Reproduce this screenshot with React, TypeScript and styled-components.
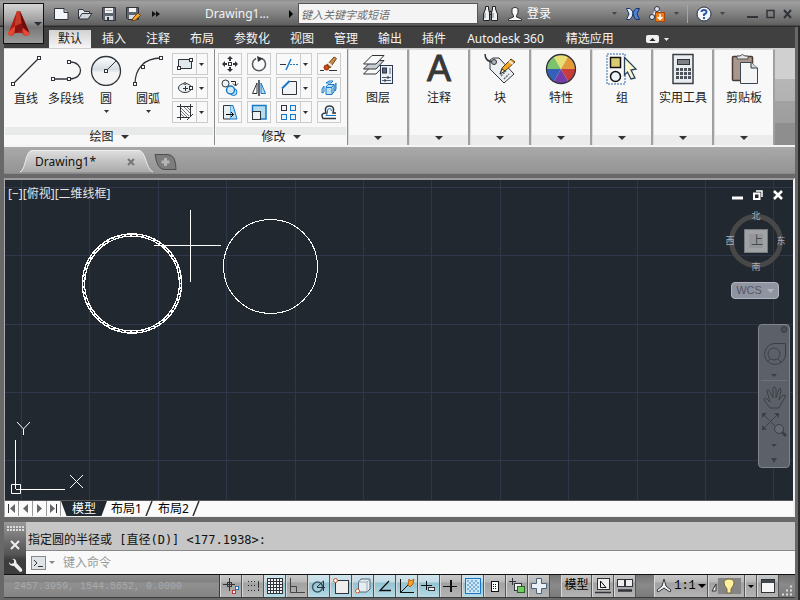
import React from "react";
import styled, { createGlobalStyle, css } from "styled-components";

const GlobalStyle = createGlobalStyle`
  * { box-sizing: border-box; }
  html, body { margin: 0; padding: 0; }
  body { background: #5a5a5a; font-family: "Noto Sans", "Noto Sans CJK SC", sans-serif; font-size: 12px; line-height: 16px; color: #222; }
  button, input { font: inherit; color: inherit; border: 0; padding: 0; margin: 0; background: none; border-radius: 0; }
  button { cursor: pointer; }
  svg { display: block; flex: none; }
`;

/* ---------- frame ---------- */

const Window = styled.div`
  position: relative;
  display: flex;
  flex-direction: column;
  min-height: 100vh;
  background: #686868;
  overflow: hidden;
`;

const Frame = styled.div`
  display: flex;
  flex: 1;
  flex-direction: column;
  padding-left: 4px;
  padding-right: 3px;
  border-right: 2px solid #2b2b2b;
`;

/* ---------- title bar ---------- */

const TitleBar = styled.header`
  display: flex;
  align-items: center;
  height: 27px;
  padding: 0 8px 0 53px;
  background: linear-gradient(#8c8c8c 0, #a0a0a0 2px, #8a8a8a 10px, #747474 18px, #606060 25px, #2c2c2c 26px);
  color: #f2f2f2;
`;

const AppButton = styled.button`
  position: absolute;
  left: 3px;
  top: 3px;
  width: 41px;
  height: 41px;
  border: 1px solid #111;
  background: linear-gradient(#d5d5d5, #a4a4a4 40%, #777 60%, #9c9c9c);
  display: flex;
  align-items: center;
  gap: 2px;
  padding: 0 2px;
`;

const QuickAccess = styled.nav`
  display: flex;
  align-items: center;
  gap: 8px;
  width: 152px;
`;

const IconButton = styled.button`
  display: flex;
  align-items: center;
  justify-content: center;
`;

const DocTitle = styled.h1`
  margin: 0;
  width: 82px;
  font-size: 12px;
  line-height: 16px;
  font-weight: 400;
  white-space: nowrap;
`;

const SearchInput = styled.input`
  width: 180px;
  height: 21px;
  margin-left: 3px;
  padding: 2px 2px 0;
  border: 1px solid #555;
  background: #f4f4f4;
  color: #333;
  font-style: italic;
  font-size: 11px;
  &::placeholder { color: #6c6c6c; opacity: 1; }
`;

const Account = styled.div`
  display: flex;
  align-items: center;
  gap: 8px;
  flex: 1;
  padding-left: 4px;
`;

const SignIn = styled.button`
  display: flex;
  align-items: center;
  gap: 4px;
  color: #fff;
`;

const InfoTools = styled.div`
  display: flex;
  align-items: center;
  gap: 8px;
  margin-right: 22px;
`;

const Rule = styled.span`
  width: 1px;
  height: 18px;
  background: #a5a5a5;
`;

const WindowControls = styled.div`
  display: flex;
  align-items: center;
  gap: 8px;
`;

/* ---------- ribbon ---------- */

const RibbonTabs = styled.nav`
  display: flex;
  align-items: flex-end;
  height: 21px;
  padding-left: 45px;
  background: #404040;
`;

const RibbonTab = styled.button<{ $active?: boolean; $wide?: boolean }>`
  height: 18px;
  padding: 0 10px;
  color: #f4f4f4;
  white-space: nowrap;
  ${(p) => p.$wide && css`padding: 0 12px 0 11px;`}
  ${(p) => p.$active && css`
    width: 42px;
    padding: 0;
    margin-right: 1px;
    color: #222;
    background: linear-gradient(#d2d2d2, #f6f6f6);
  `}
`;

const RibbonToggle = styled.button`
  display: flex;
  align-items: center;
  gap: 5px;
  height: 18px;
  margin-left: 22px;
`;

const Ribbon = styled.section`
  display: flex;
  height: 99px;
  border-top: 1px solid #cfcfcf;
  border-bottom: 2px solid #f4f4f4;
  background: #c4c4c4;
`;

const Panel = styled.div`
  display: flex;
  flex-direction: column;
  background: #f8f8f8;
  border-right: 1px solid #8e8e8e;
  padding: 0 1px;
`;

const PanelBody = styled.div<{ $modify?: boolean }>`
  display: flex;
  flex: 1;
  padding: ${(p) => (p.$modify ? "4px 5px 0 2px" : "4px 5px 0 1px")};
`;

const PanelTitle = styled.button`
  display: flex;
  align-items: center;
  justify-content: center;
  gap: 7px;
  height: 18px;
  padding-top: 2px;
  background: linear-gradient(#e8eae9 8px, #f8f8f8 8px);
`;

const LargeTool = styled.button`
  display: flex;
  flex-direction: column;
  align-items: center;
  width: 40px;
  height: 62px;
  padding-top: 1px;
  white-space: nowrap;
  &:nth-child(4) { margin: 0 4px 0 2px; }
`;

const ToolLabel = styled.span`
  margin: 5px 0 3px;
`;

const ToolGrid = styled.div<{ $cols: string }>`
  display: grid;
  grid-template-columns: ${(p) => p.$cols};
  grid-auto-rows: 22px;
  gap: 2px 5px;
`;

const SmallTool = styled.button`
  display: flex;
  align-items: center;
  justify-content: space-around;
  height: 22px;
  border: 1px solid #c9cbcd;
  background: #f9f9f9;
`;

const SplitTool = styled(SmallTool)`
  display: grid;
  grid-template-columns: 23px 11px;
  justify-items: center;
  background: linear-gradient(90deg, #f9f9f9 23px, #c9cbcd 23px, #c9cbcd 24px, #f9f9f9 24px);
`;

const CompactPanel = styled.button`
  display: flex;
  flex-direction: column;
  align-items: center;
  width: 61px;
  padding-top: 3px;
  border-top: 1px solid #dcdcdc;
  border-right: 2px solid #a0a0a0;
  border-left: 1px solid #dcdcdc;
  background: linear-gradient(#f8f8f8 85px, #ececec 85px);
  white-space: nowrap;
  & > :last-child { margin-top: auto; margin-bottom: 5px; }
`;

const RibbonFill = styled.div`
  flex: 1;
  background: linear-gradient(#d0d0d0 30px, #b6b6b6 30px, #b2b2b2 52px, #a2a2a2 52px, #9e9e9e 74px, #8e8e8e 74px);
`;

/* ---------- document tabs ---------- */

const DocTabs = styled.div`
  display: flex;
  align-items: flex-end;
  height: 27px;
  padding-left: 16px;
  padding-bottom: 1px;
  background: linear-gradient(#a9a9a9 0, #9f9f9f 12px, #949494 26px, #808080 27px);
`;

const DocTab = styled.div`
  position: relative;
  display: flex;
  align-items: center;
  justify-content: space-between;
  width: 130px;
  height: 23px;
  padding: 0 15px;
  color: #111;
`;

const TabShape = styled.svg`
  position: absolute;
  left: 0;
  top: 0;
`;

const TabText = styled.button`
  position: relative;
`;

/* ---------- drawing area ---------- */

const Viewport = styled.main`
  display: flex;
  flex: 1;
  flex-direction: column;
  margin: 4px 0 5px;
  border-top: 2px solid #999;
  border-left: 1px solid #aaa;
  border-right: 2px solid #f0f0f0;
  border-bottom: 1px solid #f0f0f0;
`;

const Canvas = styled.div`
  position: relative;
  flex: 1;
  min-height: 310px;
  background: #212830;
  overflow: hidden;
`;

const Drawing = styled.svg`
  position: absolute;
  inset: 0;
  width: 100%;
  height: 100%;
`;

const ViewLabel = styled.div`
  position: absolute;
  left: 3px;
  top: 6px;
  color: #e4e4e4;
  white-space: nowrap;
`;

const ChildControls = styled.div`
  position: absolute;
  right: 10px;
  top: 10px;
  display: flex;
  gap: 10px;
`;

const ViewCube = styled.div`
  position: absolute;
  right: 6px;
  top: 30px;
  display: grid;
  justify-items: center;
  gap: 10px;
`;

const WcsButton = styled.button`
  display: flex;
  align-items: center;
  justify-content: center;
  gap: 5px;
  width: 48px;
  height: 17px;
  margin-left: -2px;
  border: 1px solid #b1b5c1;
  border-radius: 4px;
  background: #9094a1;
  color: #535866;
  font: 11px/15px "Liberation Sans", sans-serif;
`;

const NavBar = styled.div`
  position: absolute;
  right: 3px;
  top: 144px;
  width: 32px;
  height: 144px;
  border: 1px solid #80858d;
  border-radius: 4px;
  background: #5c6169;
`;

const LayoutTabs = styled.nav`
  display: flex;
  align-items: stretch;
  height: 16px;
  border-top: 1px solid #555;
  background: #fafafa;
  color: #000;
`;

const PageButton = styled.button`
  width: 14px;
  display: flex;
  align-items: center;
  justify-content: center;
  border-right: 1px solid #999;
`;

const LayoutTab = styled.button<{ $active?: boolean }>`
  padding: 0 3px 0 4px;
  line-height: 14px;
  ${(p) => p.$active && css`
    width: 46px;
    padding: 0;
    color: #fff;
    background: #212830;
    clip-path: polygon(0 0, 100% 0, 88% 100%, 12% 100%);
  `}
`;

/* ---------- command line ---------- */

const CommandPanel = styled.section`
  display: grid;
  grid-template-columns: 22px 1fr;
  height: 52px;
`;

const CommandSide = styled.div`
  display: flex;
  flex-direction: column;
  align-items: center;
  justify-content: space-between;
  padding: 4px 2px 0;
  background: linear-gradient(#999, #666 22px, #555 32px, #3c3c3c 38px);
`;

const CommandHistory = styled.output`
  display: block;
  height: 29px;
  padding: 10px 2px 0;
  border-bottom: 1px solid #888;
  background: #c6c6c6;
  color: #111;
  font-family: "DejaVu Sans Mono", "Noto Sans CJK SC", monospace;
  white-space: nowrap;
  overflow: hidden;
`;

const CommandRow = styled.label`
  display: flex;
  align-items: center;
  gap: 3px;
  height: 23px;
  padding-left: 5px;
  background: #f9f9f9;
`;

const CommandInput = styled.input`
  flex: 1;
  min-width: 0;
  height: 20px;
  margin-left: 5px;
  outline: 0;
  &::placeholder { color: #999; opacity: 1; }
`;

/* ---------- status bar ---------- */

const StatusBar = styled.footer`
  display: flex;
  height: 24px;
  margin-bottom: 2px;
  border-top: 1px solid #111;
  border-bottom: 1px solid #3c3c3c;
  background: linear-gradient(#757575, #8a8a8a 10px, #7a7a7a);
`;

const Coordinates = styled.div`
  flex: 1;
  padding: 4px 0 0 10px;
  border-right: 1px solid #3c3c3c;
  background: linear-gradient(#8e8e8e, #828282 7px, #909090 8px, #848484);
  color: #a9a9a9;
  font: 10px/16px "Liberation Mono", monospace;
  white-space: nowrap;
`;

const StatusButton = styled.button<{ $on?: boolean; $width?: number }>`
  display: flex;
  align-items: center;
  justify-content: center;
  gap: 2px;
  width: ${(p) => p.$width ?? 22}px;
  border-right: 1px solid #555;
  border-left: 1px solid #d8d8d8;
  background: ${(p) =>
    p.$on
      ? "linear-gradient(#d2e4ec, #c3dde7 7px, #93c3d2 8px, #b5dbe6)"
      : "linear-gradient(#c9c9c9, #b9b9b9 7px, #a2a2a2 8px, #b4b4b4)"};
  color: #000;
  font-family: "Liberation Mono", "Noto Sans CJK SC", monospace;
  font-size: 12px;
  white-space: nowrap;
`;

const StatusGap = styled.span<{ $width: number }>`
  width: ${(p) => p.$width}px;
`;

/* ---------- icons ---------- */

type GlyphProps = { w?: number; h?: number; children: React.ReactNode };
const Glyph = ({ w = 16, h = 16, children }: GlyphProps) => (
  <svg width={w} height={h} viewBox={`0 0 ${w} ${h}`} fill="none" stroke="#30343a" aria-hidden="true">
    {children}
  </svg>
);

const Caret = ({ w = 5, color = "#333" }: { w?: number; color?: string }) => (
  <svg width={w} height={Math.ceil(w / 2)} viewBox="0 0 10 5" preserveAspectRatio="none" aria-hidden="true">
    <path d="M0 0H10L5 5Z" fill={color} />
  </svg>
);

const Node = ({ x, y }: { x: number; y: number }) => (
  <rect x={x - 1.5} y={y - 1.5} width="3" height="3" fill="#fff" stroke="#30343a" />
);

const NewIcon = () => (
  <Glyph><path d="M1.500 2.500H11L15 6.500V13.500H1.500Z" fill="#f3f6f8" /><path d="M11 2.500V6.500H15" fill="#b8bec4" /></Glyph>
);
const OpenIcon = () => (
  <Glyph><path d="M1.500 13V3.500H6L7.500 5.500H12.500V7" fill="#e4e7ea" /><path d="M1.500 13L5 7.500H15L11 13Z" fill="#cfd5da" /></Glyph>
);
const SaveIcon = () => (
  <Glyph><path d="M1.500 1.500H14.500V14.500H3L1.500 13Z" fill="#5e6570" /><path d="M4 2H12V7H4Z" fill="#f4f4f4" stroke="none" /><path d="M4 10H12V14H4Z" fill="#d8dce0" stroke="none" /><path d="M7 11V14" strokeWidth="2" /><path d="M5 4.500H11" stroke="#aaa" /></Glyph>
);
const SaveAsIcon = () => (
  <Glyph><path d="M1.500 1.500H13.500V13.500H3L1.500 12Z" fill="#5e6570" /><path d="M4 2H11V6H4Z" fill="#f4f4f4" stroke="none" /><path d="M4 9H10V13H4Z" fill="#d8dce0" stroke="none" /><path d="M7 15L8 12L13 7L15.500 9.500L10.500 14Z" fill="#f2a530" stroke="#6b4210" /></Glyph>
);
const AppLogo = () => (
  <svg width="26" height="30" viewBox="0 0 26 30" aria-hidden="true">
    <path d="M11 2H14L24 25L19 27L16 24H9L6 27L2 25Z" fill="#b21c17" />
    <path d="M11 2L9 17L2 23V26L7 27L9 21L16 15Z" fill="#df4a32" />
    <path d="M11 2H14L18 13L9 17Z" fill="#c63a28" />
    <path d="M14 2L24 25L16 17Z" fill="#6d0b0c" />
    <path d="M9 17L16 14L18 21L9 24Z" fill="#8a1111" />
    <path d="M16 19L24 24V26L18 27Z" fill="#e04a38" />
  </svg>
);
const Binoculars = () => (
  <Glyph w={17} h={17}><path d="M3.500 1.500H6.500V4L7.500 8V15.500H1.500V9L3.500 4Z" fill="#eef1f3" stroke="#222" /><path d="M10.500 1.500H13.500V4L15.500 9V15.500H9.500V8L10.500 4Z" fill="#eef1f3" stroke="#222" /><path d="M7 6.500H10M7 9.500H10" stroke="#222" /><path d="M3 8V13M11 8V13" stroke="#79828a" /></Glyph>
);
const UserIcon = () => (
  <Glyph><path d="M5 2.500Q8 0 11 2.500V7L9.500 9.500V11L14.500 13V14.500H1.500V13L6.500 11V9.500L5 7Z" fill="#fafafa" stroke="#333" /></Glyph>
);
const ExchangeIcon = () => (
  <Glyph><path d="M1.500 2.500H5L8 6L7.500 10L5 13.500H1.500L4 8Z" fill="#e2edf9" stroke="#1b3568" /><path d="M14.500 2.500H11L8 6L8.500 10L11 13.500H14.500L12 8Z" fill="#4c83d8" stroke="#1b3568" /></Glyph>
);
const CloudIcon = () => (
  <Glyph w={17}><path d="M3 11L8 3L11 7" stroke="#e5e9f0" strokeWidth="2" /><circle cx="3" cy="11" r="2.500" fill="#dfe7f3" stroke="#334" /><circle cx="8" cy="3" r="2.500" fill="#dfe7f3" stroke="#334" /><rect x="6.500" y="6.500" width="9" height="9" fill="#ef7b16" stroke="#a5460c" /><path d="M11 8V13M8.500 11L11 13.500L13.500 11" stroke="#fff" strokeWidth="1.500" /></Glyph>
);
const HelpIcon = () => (
  <Glyph><circle cx="8" cy="8" r="7" fill="#f4f7fb" stroke="#222e46" /><path d="M5.500 6Q5.500 4 8 4T10.500 6Q10.500 7.500 8 8.500V10M8 11V13" stroke="#2b5aa8" strokeWidth="2" /></Glyph>
);

const LineIcon = () => <Glyph w={32} h={32}><path d="M3 30L29 4" strokeWidth="1.300" /><Node x={3} y={30} /><Node x={29} y={4} /></Glyph>;
const PolyIcon = () => <Glyph w={32} h={32}><path d="M3 25H20C34 25 34 8 20 8" strokeWidth="1.300" /><Node x={3} y={25} /><Node x={19} y={25} /><Node x={19} y={8} /></Glyph>;
const CircleIcon = () => (
  <Glyph w={32} h={32}>
    <defs><linearGradient id="disc" x2="0" y2="1"><stop offset="0" stopColor="#fff" /><stop offset=".45" stopColor="#d4dde3" /><stop offset=".55" stopColor="#f4f4f4" /></linearGradient></defs>
    <circle cx="16" cy="17" r="14.500" fill="url(#disc)" strokeWidth="1.300" /><path d="M16 17L26 7" /><Node x={16} y={17} />
  </Glyph>
);
const ArcIcon = () => <Glyph w={32} h={32}><path d="M3 30C3 15 12 4 29 4" strokeWidth="1.300" /><Node x={3} y={30} /><Node x={11} y={13} /><Node x={29} y={4} /></Glyph>;

const RectIcon = () => <Glyph><path d="M1.500 3.500H14.500V12.500H1.500Z" fill="#e0e9ee" /><Node x={14} y={4} /><Node x={2} y={12} /></Glyph>;
const EllipseIcon = () => <Glyph><ellipse cx="8" cy="8" rx="6.500" ry="4.500" fill="#edf1f3" /><path d="M6 8.500H11M8.500 6V11" /><Node x={14} y={8} /><circle cx="8" cy="3.500" r="1" fill="#fff" /></Glyph>;
const HatchIcon = () => <Glyph><path d="M3.500 0V16M0 2.500H16M13.500 0V12M0 13.500H12M16 10L10 16" /><path d="M4 4L12 12M4 7L10 13M4 10L7 13M7 3L13 9M10 3L13 6" stroke="#777" /></Glyph>;
const MoveIcon = () => <Glyph><path d="M8 0L11 3H9V5H7V3H5ZM8 16L5 13H7V11H9V13H11ZM0 8L3 5V7H5V9H3V11ZM16 8L13 11V9H11V7H13V5Z" fill="#30343a" stroke="none" /><Node x={8} y={8} /></Glyph>;
const RotateIcon = () => <Glyph><path d="M11 2.500A6.500 6.500 0 1 1 5 2.500" stroke="#555a60" strokeWidth="1.500" /><path d="M6 0L12 2.500L7 6Z" fill="#30343a" stroke="none" /></Glyph>;
const TrimIcon = () => <Glyph w={18}><path d="M0 8.500H6" /><path d="M6 14L11 3" stroke="#1979c8" strokeWidth="1.500" /><path d="M10 8.500H18" stroke="#1979c8" strokeDasharray="2 1" /></Glyph>;
const EraseIcon = () => <Glyph w={18} h={18}><path d="M7 10L14 2L16.500 3.500L10 13Z" fill="#c98b42" stroke="#70441c" /><path d="M8 8L12 11" stroke="#eee" strokeWidth="2" /><circle cx="6.500" cy="12.500" r="2.500" fill="#c94d16" stroke="#8c2f0c" /><path d="M0 15.500H4M9 15.500H17" /></Glyph>;
const CopyIcon = () => <Glyph w={18} h={18}><circle cx="4.500" cy="4.500" r="3.500" fill="#eef2f4" /><circle cx="12.500" cy="13" r="3.500" fill="#bedff2" stroke="#1979c8" /><circle cx="9.500" cy="11" r="4" fill="#d5ecf7" stroke="#1979c8" strokeWidth="1.500" /><path d="M10 2.500H14.500V6M12 4.500L14.500 7L17 4.500" stroke="#222" /></Glyph>;
const MirrorIcon = () => <Glyph><path d="M6 3V13.500H1.500Z" fill="#fff" /><path d="M8 0V16" strokeWidth="1.500" /><path d="M10 3V13.500H14.500Z" fill="#b4dcf0" stroke="#1979c8" /></Glyph>;
const ChamferIcon = () => <Glyph><path d="M8 1.500H15.500V14.500H1.500V8" fill="#f1f3f4" /><path d="M1 8.500L8.500 1" stroke="#1979c8" strokeWidth="2" /></Glyph>;
const ExplodeIcon = () => <Glyph><path d="M5 7.500H11V14.500H5ZM5 7L7 4.500H13L11 7M13 5V12L11 14" fill="#b9e1f2" stroke="#1979c8" /><path d="M3 6L1 9V13L3 12ZM5 3L8 1H12L10 3ZM15 3V9L14 11V5Z" fill="#dceef7" stroke="#1979c8" /></Glyph>;
const StretchIcon = () => <Glyph><path d="M8 1.500H11L15 15H8Z" fill="#b4dcec" stroke="#1979c8" /><path d="M8 1.500H1.500V15H8" fill="#e9eef1" /><path d="M4 10.500H11M9 8L11.500 10.500L9 13" stroke="#000" /></Glyph>;
const ScaleIcon = () => <Glyph><path d="M1.500 9V1.500H15V15H9" fill="#b4dcec" stroke="#1979c8" strokeWidth="1.500" /><rect x="1.500" y="7.500" width="8" height="8" fill="#eef1f3" /></Glyph>;
const ArrayIcon = () => <Glyph w={17} h={17}><rect x="1.500" y="1.500" width="5" height="5" fill="#f2f2f2" /><g stroke="#1979c8" fill="#e4f1f8"><rect x="10.500" y="1.500" width="5" height="5" /><rect x="1.500" y="10.500" width="5" height="5" /><rect x="10.500" y="10.500" width="5" height="5" /></g></Glyph>;
const OffsetIcon = () => <Glyph><path d="M15 14.500H2Q-1 9 5 9Q3 2 8.500 2T12 9H15" strokeWidth="1.500" /><path d="M15 11.500H5Q7 10 6.500 7Q6.500 4.500 8.500 4.500T10.500 7" stroke="#1979c8" /></Glyph>;

const LayersIcon = () => (
  <Glyph w={32} h={32}>{[21, 16, 11].map((y) => <path key={y} d={`M1.500 ${y}L10 ${y - 8.5}H22L14 ${y}Z`} fill={y === 16 ? "#c8ced3" : "#f8f8f8"} />)}<rect x="18.500" y="12.500" width="12" height="18" fill="#edf1f5" stroke="#283850" /><rect x="20.500" y="15" width="4" height="5" fill="#52698b" /><path d="M28 15V21M20 24.500H29M20 27.500H29" stroke="#555e6b" /><path d="M26 23V26M23 26V29" /></Glyph>
);
const TextIcon = styled.span`
  height: 32px;
  color: #383838;
  font: 36px/32px "Liberation Sans", sans-serif;
  -webkit-text-stroke: 1px #383838;
`;
const BlockIcon = () => (
  <Glyph w={32} h={32}><path d="M6 7L9 5H15L30 21L20 30L6 16Z" fill="#edf0f2" /><path d="M1 1C1 7 5 9 10 9" strokeWidth="1.500" /><circle cx="10" cy="9" r="2.500" fill="#aab2ba" /><path d="M17 23L22 18M20 26L25 21" stroke="#687078" strokeWidth="1.500" strokeDasharray="2 1" /><path d="M16 21L18 15L27 6L31 9L21 18Z" fill="#f5a623" stroke="#563a18" /><path d="M25 8L29 11" stroke="#eee" strokeWidth="2" /><path d="M16 21L18 16L21 18Z" fill="#fff0bd" /></Glyph>
);
const wheel = ["#c63c38", "#753ca9", "#3660b7", "#7dc36b", "#e7df73", "#e49a3b"];
const WheelIcon = () => (
  <Glyph w={32} h={32}>
    {wheel.map((c, i) => {
      const a = (i * Math.PI) / 3, b = a + Math.PI / 3;
      return <path key={c} d={`M16 16L${16 + 14.5 * Math.cos(a)} ${16 + 14.5 * Math.sin(a)}A14.5 14.5 0 0 1 ${16 + 14.5 * Math.cos(b)} ${16 + 14.5 * Math.sin(b)}Z`} fill={c} stroke="none" />;
    })}
    <circle cx="16" cy="16" r="14.500" strokeWidth="1.300" />
  </Glyph>
);
const GroupIcon = () => (
  <Glyph w={32} h={32}><rect x="1" y="1" width="18" height="30" stroke="#3468aa" strokeDasharray="2 1" /><rect x="4.500" y="4.500" width="10" height="10" fill="#dacb70" stroke="#111" strokeWidth="1.500" /><circle cx="9.500" cy="23.500" r="5" fill="#edf5f8" stroke="#111" strokeWidth="1.500" /><path d="M18.500 4.500L30 16L25 17L29 25L25 26L21.500 19L18.500 22Z" fill="#fbf7cf" stroke="#29435f" strokeWidth="1.300" /></Glyph>
);
const CalcIcon = () => (
  <Glyph w={32} h={32}><rect x="6" y="1.500" width="20" height="29" fill="#e9edf0" stroke="#3b3f46" strokeWidth="1.500" /><rect x="10.500" y="6.500" width="12" height="5" fill="#7b8187" />{[15, 19, 23].map((y) => [9, 13, 17, 21].map((x) => <rect key={`${x}-${y}`} x={x} y={y} width="3" height="3" fill="#4c535d" stroke="none" />))}</Glyph>
);
const ClipboardIcon = () => (
  <Glyph w={32} h={32}><rect x="4.500" y="3.500" width="20" height="24" rx="1" fill="#a8978a" stroke="#493b32" strokeWidth="1.500" /><path d="M9 6V3H12Q14 0 17 3H20V6Z" fill="#e5e7ea" stroke="#555" /><path d="M12.500 9.500H23L29.500 15V30.500H12.500Z" fill="#f3f5f7" stroke="#3c4653" /><path d="M23 9.500V15H29.500" fill="#d7dce0" /></Glyph>
);

/* ---------- drawing content ---------- */

const steps = Array.from({ length: 40 }, (_, i) => i);
const gridX = (i: number) => Math.round(21 + i * 68.4) + 0.5;
const gridY = (i: number) => Math.round(187 + i * 68.3) + 0.5;

const CadDrawing = () => (
  <Drawing aria-label="Model space">
    <defs>
      <pattern id="minor" width="13.680" height="13.660" patternUnits="userSpaceOnUse" x="21" y="187">
        <rect width="1" height="1" fill="#2b323d" />
      </pattern>
    </defs>
    <g transform="translate(-5 -180)" fill="none">
      <rect width="2700" height="2700" fill="url(#minor)" />
      {steps.map((i) => <path key={i} d={`M${gridX(i)} 0V2700M0 ${gridY(i)}H2700`} stroke="#2f374a" />)}
      <circle cx="132" cy="283.500" r="48.500" stroke="#fff" strokeWidth="3.500" shapeRendering="crispEdges" />
      <circle cx="132" cy="283.500" r="48.500" stroke="#212830" strokeDasharray="4 2" shapeRendering="crispEdges" />
      <circle cx="270.500" cy="266.500" r="47" stroke="#fff" shapeRendering="crispEdges" />
      <path d="M190.500 210V282M154 245.500H221" stroke="#fff" />
      <g stroke="#fff">
        <path d="M15.500 440V489M16 489.500H65M11.500 484.500H20.500V493.500H11.500Z" />
        <path d="M17 422L23.500 429V435M30 422L23.500 429M70 475L83 488M83 475L70 488" strokeWidth="1" />
      </g>
    </g>
  </Drawing>
);

const Compass = () => (
  <svg width="62" height="62" viewBox="0 0 62 62" fontSize="9" fill="#aaaeb2" textAnchor="middle" fontFamily="Noto Sans CJK SC, sans-serif">
    <circle cx="31" cy="31" r="24.500" fill="none" stroke="#484848" strokeWidth="5" />
    <rect x="19.500" y="19.500" width="23" height="23" fill="#a0a3a6" stroke="#777b80" />
    <rect x="24" y="24" width="14" height="14" fill="#94979a" />
    <text x="32" y="35" fontSize="12" fill="#46494d">上</text>
    <text x="31" y="9">北</text><text x="31" y="60">南</text><text x="5" y="34">西</text><text x="56" y="34">东</text>
  </svg>
);

const NavIcons = () => (
  <svg width="30" height="142" viewBox="0 0 30 142" fill="none" stroke="#3c4045" aria-hidden="true">
    <circle cx="25" cy="4.500" r="3" fill="#4a4e54" />
    <path d="M15 18.500H26.500V30A10.500 10.500 0 1 1 15 18.500M8 37L12 33M22 37L18 33" /><circle cx="15" cy="29" r="6" />
    <path d="M12 49H18L15 52Z" fill="#3c4045" stroke="none" />
    <path d="M2 55.500H28" stroke="#6d7178" />
    <path d="M11 83L5 75Q4 72 8 74L11 77L8 66Q9 63 11 67L14 73V63Q16 60 17 64V73L20 64Q22 62 22 66L20 75L24 70Q27 69 26 72L20 83Z" />
    <path d="M5 90L18 103M18 90L5 103" /><path d="M3 88H8L3 93ZM20 88V93L15 88ZM3 105V100L8 105Z" fill="#3c4045" stroke="none" /><circle cx="20" cy="104" r="4.500" fill="#646a72" /><path d="M23 107L27 111" strokeWidth="3" />
    <path d="M12 119H18L15 122ZM12 133H18L15 138Z" fill="#3c4045" stroke="none" />
  </svg>
);

/* ---------- status icons ---------- */

const statusIcons: { label: string; on?: boolean; icon: React.ReactNode }[] = [
  { label: "推断约束", icon: <><path d="M0 6.500H12M6.500 0V13" /><rect x="4.500" y="4.500" width="4" height="4" /><rect x="12.500" y="8.500" width="3" height="3" stroke="#2a70b0" fill="#fff" /><rect x="9.500" y="12.500" width="3" height="3" stroke="#c33" fill="#fff" /></> },
  { label: "捕捉模式", icon: <><path d="M3 3.500H12M3 7.500H12M3 12.500H12" stroke="#222" strokeDasharray="1 2" /><path d="M13.500 3V13" strokeDasharray="7 1" /></> },
  { label: "栅格显示", on: true, icon: <><rect x=".5" y=".5" width="15" height="15" fill="#f5f5f5" /><path d="M3.500 0V16M6.500 0V16M9.500 0V16M12.500 0V16M0 3.500H16M0 6.500H16M0 9.500H16M0 12.500H16" /></> },
  { label: "正交模式", icon: <path d="M1.500 0V14.500H16M2 8.500H7.500V14" strokeWidth="1" stroke="#444" /> },
  { label: "极轴追踪", on: true, icon: <><circle cx="6.500" cy="9" r="5" stroke="#456" strokeWidth="1.500" /><path d="M6 9.500H14M6 9L12.500 3V13" /></> },
  { label: "对象捕捉", on: true, icon: <><rect x="2.500" y="2.500" width="13" height="13" fill="#eee" /><circle cx="2.500" cy="2.500" r="2" fill="#fff" stroke="#d4511c" /></> },
  { label: "三维对象捕捉", on: true, icon: <><path d="M3.500 4L6 1H15V11L12 14H3.500Z" fill="#e8edf1" stroke="#567" /><path d="M3.500 4H12V14M12 4L15 1" stroke="#9ab" /><circle cx="2.500" cy="13" r="2" fill="#fff" stroke="#d4511c" /></> },
  { label: "对象捕捉追踪", on: true, icon: <path d="M12 3L3 12.500H14" strokeWidth="1.300" stroke="#111" /> },
  { label: "动态 UCS", on: true, icon: <><path d="M1.500 1V14.500H15M1.500 14.500L9 7" stroke="#111" /><path d="M9 7L10 1L12 3L15 1L14 6L11 9Z" fill="#f3a329" stroke="#bd5d14" /></> },
  { label: "动态输入", on: true, icon: <><path d="M0 7.500H11M5.500 3V12" stroke="#111" /><rect x="7.500" y="9.500" width="6" height="3" fill="#eee" /></> },
  { label: "线宽", icon: <><path d="M0 8.500H7" stroke="#111" /><path d="M8 2V14" stroke="#111" strokeWidth="2" /><path d="M8 8.500H14" stroke="#111" /></> },
  { label: "透明度", on: true, icon: <><rect x=".5" y=".5" width="15" height="15" fill="#cfe7f5" stroke="#1976c6" /><path d="M2 3H14M2 7H14M2 11H14" strokeDasharray="2 2" strokeWidth="2" stroke="#7fb4d8" /><path d="M4 5H14M4 9H14M4 13H14" strokeDasharray="2 2" strokeWidth="2" stroke="#7fb4d8" /></> },
  { label: "快捷特性", icon: <><rect x="4.500" y="3.500" width="7" height="10" fill="#fff" stroke="#111" /><path d="M6 6.500H10M6 8.500H10M6 10.500H10" stroke="#111" strokeDasharray="1 1" /></> },
  { label: "选择循环", icon: <><path d="M0 3.500H7M3.500 0V7" /><rect x="5.500" y="5.500" width="7" height="7" fill="#eee" /><rect x="8.500" y="8.500" width="7" height="6" fill="#75ca66" stroke="#276325" /></> },
  { label: "注释监视器", icon: <path d="M5.500 .5H10.500V5.500H15.500V10.500H10.500V15.500H5.500V10.500H.5V5.500H5.500Z" fill="#e9f1f7" stroke="#4b6378" /> },
];

const tabs = ["插入", "注释", "布局", "参数化", "视图", "管理", "输出", "插件"];

const drawTools = [
  { label: "直线", icon: <LineIcon /> },
  { label: "多段线", icon: <PolyIcon /> },
  { label: "圆", icon: <CircleIcon />, menu: true },
  { label: "圆弧", icon: <ArcIcon />, menu: true },
];

const drawSmall = [["矩形", <RectIcon />], ["椭圆", <EllipseIcon />], ["图案填充", <HatchIcon />]] as const;

const modifyTools: { label: string; icon: React.ReactNode; split?: boolean }[] = [
  { label: "移动", icon: <MoveIcon /> }, { label: "旋转", icon: <RotateIcon /> }, { label: "修剪", icon: <TrimIcon />, split: true }, { label: "删除", icon: <EraseIcon /> },
  { label: "复制", icon: <CopyIcon /> }, { label: "镜像", icon: <MirrorIcon /> }, { label: "圆角", icon: <ChamferIcon />, split: true }, { label: "分解", icon: <ExplodeIcon /> },
  { label: "拉伸", icon: <StretchIcon /> }, { label: "缩放", icon: <ScaleIcon /> }, { label: "阵列", icon: <ArrayIcon />, split: true }, { label: "偏移", icon: <OffsetIcon /> },
];

const compactPanels = [
  { label: "图层", icon: <LayersIcon /> },
  { label: "注释", icon: <TextIcon aria-hidden="true">A</TextIcon> },
  { label: "块", icon: <BlockIcon /> },
  { label: "特性", icon: <WheelIcon /> },
  { label: "组", icon: <GroupIcon /> },
  { label: "实用工具", icon: <CalcIcon /> },
  { label: "剪贴板", icon: <ClipboardIcon /> },
];

const Slash = () => <Glyph w={9} h={15}><path d="M1 15L7 0" stroke="#333" strokeWidth="1.500" /></Glyph>;

export default function App() {
  return (
    <>
      <GlobalStyle />
      <Window>
        <TitleBar>
          <QuickAccess>
            <IconButton aria-label="新建"><NewIcon /></IconButton>
            <IconButton aria-label="打开"><OpenIcon /></IconButton>
            <IconButton aria-label="保存"><SaveIcon /></IconButton>
            <IconButton aria-label="另存为"><SaveAsIcon /></IconButton>
            <IconButton aria-label="更多"><Glyph w={12} h={8}><path d="M3 1L7 4L3 7ZM7 1L11 4L7 7Z" fill="#111" stroke="none" /></Glyph></IconButton>
          </QuickAccess>
          <DocTitle>Drawing1...</DocTitle>
          <IconButton aria-label="展开搜索"><Glyph w={8} h={8}><path d="M2 0L6 4L2 8Z" fill="#000" stroke="none" /></Glyph></IconButton>
          <SearchInput aria-label="搜索" placeholder="键入关键字或短语" />
          <Account>
            <IconButton aria-label="查找"><Binoculars /></IconButton>
            <SignIn><UserIcon />登录</SignIn>
          </Account>
          <InfoTools>
            <Caret color="#444" />
            <IconButton aria-label="Exchange"><ExchangeIcon /></IconButton>
            <IconButton aria-label="A360"><CloudIcon /></IconButton>
            <Caret color="#444" />
            <Rule />
            <IconButton aria-label="帮助"><HelpIcon /></IconButton>
            <Caret color="#444" />
          </InfoTools>
          <WindowControls>
            <IconButton aria-label="最小化"><Glyph w={11} h={10}><path d="M0 8H11" strokeWidth="2" /></Glyph></IconButton>
            <IconButton aria-label="最大化"><Glyph w={9} h={10}><rect x="1" y="1.500" width="7" height="7" strokeWidth="1.500" /></Glyph></IconButton>
            <IconButton aria-label="关闭"><Glyph w={9} h={10}><path d="M1 1L8 9M8 1L1 9" strokeWidth="2" /></Glyph></IconButton>
          </WindowControls>
        </TitleBar>
        <AppButton aria-label="应用程序菜单"><AppLogo /><Caret w={8} color="#28303a" /></AppButton>

        <Frame>
          <RibbonTabs>
            <RibbonTab $active>默认</RibbonTab>
            {tabs.map((t) => <RibbonTab key={t}>{t}</RibbonTab>)}
            <RibbonTab $wide>Autodesk 360</RibbonTab>
            <RibbonTab>精选应用</RibbonTab>
            <RibbonToggle aria-label="最小化功能区">
              <Glyph w={13} h={8}><rect x="0" y="0" width="13" height="8" rx="2" fill="#f0f0f0" stroke="none" /><path d="M3.500 6H9.500L6.500 3Z" fill="#222" stroke="none" /></Glyph>
              <Caret color="#eee" />
            </RibbonToggle>
          </RibbonTabs>

          <Ribbon>
            <Panel>
              <PanelBody>
                {drawTools.map((t) => (
                  <LargeTool key={t.label}>{t.icon}<ToolLabel>{t.label}</ToolLabel>{t.menu && <Caret />}</LargeTool>
                ))}
                <ToolGrid $cols="36px">
                  {drawSmall.map(([label, icon]) => <SplitTool key={label} aria-label={label}>{icon}<Caret /></SplitTool>)}
                </ToolGrid>
              </PanelBody>
              <PanelTitle>绘图<Caret w={8} /></PanelTitle>
            </Panel>
            <Panel>
              <PanelBody $modify>
                <ToolGrid $cols="24px 24px 36px 24px">
                  {modifyTools.map((t) =>
                    t.split
                      ? <SplitTool key={t.label} aria-label={t.label}>{t.icon}<Caret /></SplitTool>
                      : <SmallTool key={t.label} aria-label={t.label}>{t.icon}</SmallTool>
                  )}
                </ToolGrid>
              </PanelBody>
              <PanelTitle>修改<Caret w={8} /></PanelTitle>
            </Panel>
            {compactPanels.map((p) => (
              <CompactPanel key={p.label}>{p.icon}<ToolLabel>{p.label}</ToolLabel><Caret w={8} /></CompactPanel>
            ))}
            <RibbonFill />
          </Ribbon>

          <DocTabs>
            <DocTab>
              <TabShape width="136" height="23" viewBox="0 0 136 23" aria-hidden="true">
                <defs><linearGradient id="tab" x2="0" y2="1"><stop offset="0" stopColor="#dedede" /><stop offset=".5" stopColor="#c4c4c4" /><stop offset="1" stopColor="#aaa" /></linearGradient></defs>
                <path d="M0 22C6 20 5 1 12 .5H119C126 1 126 20 133 22" fill="url(#tab)" stroke="#eee" />
              </TabShape>
              <TabText>Drawing1*</TabText>
              <TabText aria-label="关闭图形"><Glyph w={8} h={8}><path d="M1 1L7 7M7 1L1 7" stroke="#777" strokeWidth="2" /></Glyph></TabText>
            </DocTab>
            <IconButton aria-label="新图形">
              <Glyph w={32} h={20}><path d="M5 1.500H18Q26 2 26 16.500H14Q7 16 5 1.500Z" fill="#7c7c7c" stroke="#4e4e4e" /><path d="M15.500 5V13M11.500 9H19.500" stroke="#b4b4b4" strokeWidth="3" /></Glyph>
            </IconButton>
          </DocTabs>

          <Viewport>
            <Canvas>
              <CadDrawing />
              <ViewLabel>[−][俯视][二维线框]</ViewLabel>
              <ChildControls>
                <IconButton aria-label="最小化图形"><Glyph w={11} h={10}><path d="M0 8H11" stroke="#fff" strokeWidth="3" /></Glyph></IconButton>
                <IconButton aria-label="还原图形"><Glyph w={10} h={10}><path d="M3 1H9V7" stroke="#fff" strokeWidth="1.500" /><rect x="1" y="3.500" width="5.500" height="5.500" stroke="#fff" strokeWidth="2" /></Glyph></IconButton>
                <IconButton aria-label="关闭图形窗口"><Glyph w={10} h={10}><path d="M1 1L9 9M9 1L1 9" stroke="#fff" strokeWidth="2.500" /></Glyph></IconButton>
              </ChildControls>
              <ViewCube>
                <Compass />
                <WcsButton>WCS <Caret w={7} color="#aeb5bb" /></WcsButton>
              </ViewCube>
              <NavBar><NavIcons /></NavBar>
            </Canvas>
            <LayoutTabs>
              <PageButton aria-label="第一个"><Glyph w={9} h={9}><path d="M1.500 0V9" /><path d="M8 0V9L3 4.500Z" fill="#666" stroke="none" /></Glyph></PageButton>
              <PageButton aria-label="上一个"><Glyph w={9} h={9}><path d="M7 0V9L2 4.500Z" fill="#666" stroke="none" /></Glyph></PageButton>
              <PageButton aria-label="下一个"><Glyph w={9} h={9}><path d="M2 0V9L7 4.500Z" fill="#666" stroke="none" /></Glyph></PageButton>
              <PageButton aria-label="最后一个"><Glyph w={9} h={9}><path d="M7.500 0V9" /><path d="M1 0V9L6 4.500Z" fill="#666" stroke="none" /></Glyph></PageButton>
              <LayoutTab $active>模型</LayoutTab>
              <LayoutTab>布局1</LayoutTab><Slash />
              <LayoutTab>布局2</LayoutTab><Slash />
            </LayoutTabs>
          </Viewport>

          <CommandPanel>
            <CommandSide>
              <Glyph w={17} h={5}><path d="M0 1H17M0 4H17" stroke="#ddd" strokeWidth="2" strokeDasharray="2 1" /></Glyph>
              <IconButton aria-label="关闭命令行"><Glyph w={10} h={10}><path d="M1 1L9 9M9 1L1 9" stroke="#eee" strokeWidth="2" /></Glyph></IconButton>
              <IconButton aria-label="自定义"><Glyph w={15}><path d="M1 4L3 6L6 5V2L4 1Q8 0 8.500 5L14 11Q15 14 12 14L6 8Q1 8 1 4Z" fill="#eee" stroke="none" /></Glyph></IconButton>
            </CommandSide>
            <div>
              <CommandHistory>指定圆的半径或 [直径(D)] &lt;177.1938&gt;:</CommandHistory>
              <CommandRow>
                <Glyph w={15} h={14}><rect x=".5" y=".5" width="14" height="13" fill="#e1e4e7" stroke="#888" /><path d="M3 4L6 7L3 10M7 10.500H12" /></Glyph>
                <Caret w={6} color="#888" />
                <CommandInput aria-label="命令" placeholder="键入命令" />
              </CommandRow>
            </div>
          </CommandPanel>

          <StatusBar>
            <Coordinates>2457.3959, 1544.5652, 0.0000</Coordinates>
            {statusIcons.map((s) => (
              <StatusButton key={s.label} $on={s.on} aria-pressed={!!s.on} aria-label={s.label}><Glyph>{s.icon}</Glyph></StatusButton>
            ))}
            <StatusGap $width={11} />
            <StatusButton $width={31}>模型</StatusButton>
            <StatusButton aria-label="快速查看布局"><Glyph><rect x="2.500" y=".5" width="12" height="11" fill="#eee" /><path d="M5.500 3V9.500H11Z" stroke="#111" /><path d="M0 14.500H16" strokeWidth="1.500" /></Glyph></StatusButton>
            <StatusButton aria-label="快速查看图形"><Glyph><rect x=".5" y="1.500" width="7" height="7" fill="#eee" /><rect x="8.500" y="1.500" width="7" height="7" fill="#eee" /><path d="M1 12.500H15" strokeWidth="2.500" /></Glyph></StatusButton>
            <StatusGap $width={18} />
            <StatusButton $width={54}><Glyph><path d="M8 1L10 8L15 12L14 14L8 10L2 14L1 12L6 8Z" fill="#f1f4f6" /></Glyph>1:1<Caret w={8} color="#000" /></StatusButton>
            <StatusButton $width={37} aria-label="注释可见性"><Glyph w={32} h={16}><path d="M1 13L5 6V13Z" fill="#eee" /><rect x="7" y="0" width="23" height="16" fill="#858585" stroke="none" /><path d="M16 11Q13 7 13 5Q13 1 18 1T23 5Q23 7 20 11V15H16Z" fill="#fff1a0" stroke="#776b3c" /></Glyph></StatusButton>
            <StatusButton $width={12} aria-label="状态栏菜单"><Caret w={6} color="#000" /></StatusButton>
            <StatusButton aria-label="全屏显示"><Glyph><rect x="1.500" y="1.500" width="13" height="13" fill="#f6f6f6" /><path d="M2 3.500H14" strokeWidth="3" stroke="#424750" /></Glyph></StatusButton>
            <Glyph w={16} h={22}><path d="M3 19.500H14M7 15.500H14M11 11.500H14" stroke="#ddd" strokeWidth="2" strokeDasharray="2 2" /></Glyph>
          </StatusBar>
        </Frame>
      </Window>
    </>
  );
}
